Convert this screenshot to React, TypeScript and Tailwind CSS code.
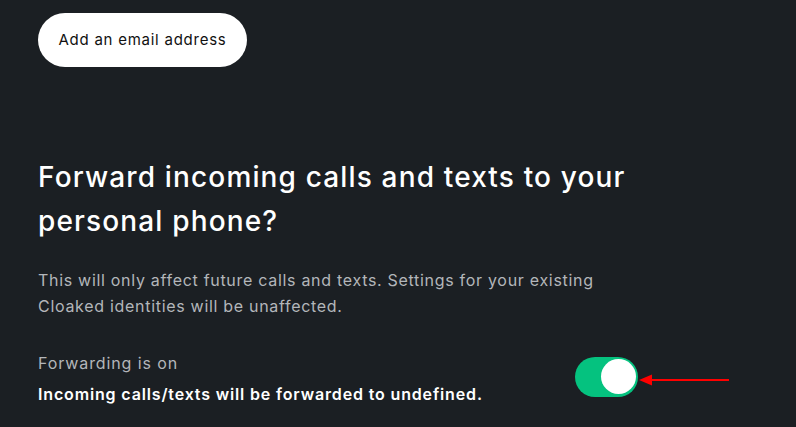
export default function App() {
  return (
    <div
      className="w-[796px] h-[427px] overflow-hidden bg-[#1b1f23] pl-[38px] pt-[13px]"
      style={{ fontFamily: "Inter, 'Noto Sans', sans-serif" }}
    >
      <button className="h-[54px] w-[209px] rounded-full bg-white text-[15px] tracking-[0.75px] text-[#111] flex items-center justify-center">
        Add an email address
      </button>

      <h2 className="mt-[88px] w-[640px] text-[28px] leading-[44px] font-medium text-white tracking-[1.15px]">
        Forward incoming calls and texts to your personal phone?
      </h2>

      <p className="mt-[24px] text-[16px] leading-[26px] text-[#b3b6ba] tracking-[0.7px]">
        This will only affect future calls and texts. Settings for your existing
        <br />
        Cloaked identities will be unaffected.
      </p>

      <div className="mt-[32px] flex items-center">
        <div className="w-[537px] flex flex-col gap-[7px]">
          <div className="text-[16px] leading-[24px] text-[#b3b6ba] tracking-[0.9px]">
            Forwarding is on
          </div>
          <div className="text-[16px] leading-[24px] font-semibold text-white tracking-[0.85px]">
            Incoming calls/texts will be forwarded to undefined.
          </div>
        </div>
        <div className="relative mb-[4px]">
          <div className="w-[63px] h-[40px] rounded-full bg-[#05c27f] flex items-center justify-end pr-[2px]">
            <div className="w-[35px] h-[35px] rounded-full bg-white" />
          </div>
          <svg
            className="absolute left-[64px] top-[16px]"
            width="92"
            height="14"
            viewBox="0 0 92 14"
          >
            <path d="M0 7 L13 1.5 L13 12.5 Z" fill="#f00" />
            <line x1="12" y1="7" x2="90" y2="7" stroke="#f00" strokeWidth="2.2" />
          </svg>
        </div>
      </div>
    </div>
  )
}
